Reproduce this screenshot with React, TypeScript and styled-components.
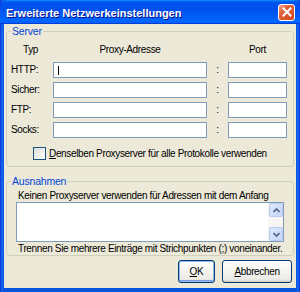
import styled, { createGlobalStyle } from 'styled-components';

const GlobalStyle = createGlobalStyle`
  html, body {
    margin: 0;
    padding: 0;
    background: #fff;
  }
  body {
    font-family: "Liberation Sans", Arial, sans-serif;
    font-size: 10px;
    letter-spacing: -0.35px;
    color: #000;
  }
`;

//Types
interface proxyRow {
  id: string,
  label: string,
  caret?: boolean
}

const rows: proxyRow[] = [
  { id: 'http', label: 'HTTP:', caret: true },
  { id: 'ssl', label: 'Sicher:' },
  { id: 'ftp', label: 'FTP:' },
  { id: 'socks', label: 'Socks:' },
];

const App: React.FC = () => {
  return (
    <>
      <GlobalStyle />
      <Window>
        <TitleBar>
          <Title>Erweiterte Netzwerkeinstellungen</Title>
          <CloseButton>
            <svg width="10" height="10" viewBox="0 0 10 10">
              <path d="M1.5 1.5 L8.5 8.5 M8.5 1.5 L1.5 8.5" stroke="#fff" strokeWidth="2" strokeLinecap="square" />
            </svg>
          </CloseButton>
        </TitleBar>
        <Body>
          <Group>
            <Legend>Server</Legend>
            <ProxyGrid>
              <Head>Typ</Head>
              <Head>Proxy-Adresse</Head>
              <Head />
              <Head>Port</Head>
              {rows.map((row) => (
                <Row key={row.id}>
                  <Label>{row.label}</Label>
                  <Input>{row.caret && <Caret />}</Input>
                  <Colon>:</Colon>
                  <Input />
                </Row>
              ))}
            </ProxyGrid>
            <CheckRow>
              <CheckBox />
              <span><u>D</u>enselben Proxyserver für alle Protokolle verwenden</span>
            </CheckRow>
          </Group>
          <Group $gap={8}>
            <Legend>Ausnahmen</Legend>
            <Note $top={3}>Keinen Proxyserver verwenden für Adressen mit dem Anfang</Note>
            <TextArea>
              <TextField />
              <ScrollBar>
                <ScrollButton>
                  <svg width="7" height="5" viewBox="0 0 7 5">
                    <polyline points="0.5,4 3.5,1 6.5,4" fill="none" stroke="#4D6185" strokeWidth="1.6" />
                  </svg>
                </ScrollButton>
                <Track />
                <ScrollButton>
                  <svg width="7" height="5" viewBox="0 0 7 5">
                    <polyline points="0.5,1 3.5,4 6.5,1" fill="none" stroke="#4D6185" strokeWidth="1.6" />
                  </svg>
                </ScrollButton>
              </ScrollBar>
            </TextArea>
            <Note $top={1}>Trennen Sie mehrere Einträge mit Strichpunkten (;) voneinander.</Note>
          </Group>
          <Buttons>
            <Button $default $width={37}><u>O</u>K</Button>
            <Button $width={70}><u>A</u>bbrechen</Button>
          </Buttons>
        </Body>
      </Window>
    </>
  );
};

const Window = styled.div`
  width: 300px;
  height: 292px;
  box-sizing: border-box;
  display: flex;
  flex-direction: column;
  background: linear-gradient(90deg, #0831d9 0px, #166aee 2px, #0855dd 4px, #0855dd 296px, #166aee 298px, #0831d9 300px);
`;

const TitleBar = styled.div`
  height: 24px;
  flex: none;
  display: flex;
  align-items: center;
  justify-content: space-between;
  padding: 0 5px 0 6px;
  border-radius: 7px 7px 0 0;
  background: linear-gradient(180deg, #0997ff, #0053ee 8%, #0050ee 40%, #06f 88%, #06f 93%, #005bff 95%, #003dd7 96%, #003dd7);
`;

const Title = styled.span`
  color: #fff;
  font-weight: bold;
  font-size: 11px;
  letter-spacing: 0;
  text-shadow: 1px 1px #0f1089;
  margin-top: 1px;
`;

const CloseButton = styled.div`
  width: 17px;
  height: 17px;
  box-sizing: border-box;
  border: 1px solid #fff;
  border-radius: 3px;
  display: flex;
  align-items: center;
  justify-content: center;
  background: linear-gradient(135deg, #f0a488 0%, #e0623a 35%, #d2441c 100%);
`;

const Body = styled.div`
  flex: 1;
  margin: 0 4px 4px;
  background: #ece9d8;
  display: flex;
  flex-direction: column;
`;

const Group = styled.fieldset<{ $gap?: number }>`
  margin: ${(p) => p.$gap ?? 1}px 2px 0;
  padding: 0;
  border: 1px solid #d0d0bf;
  border-radius: 3px;
  min-inline-size: 0;
`;

const Legend = styled.legend`
  color: #0046d5;
  font-size: 10.5px;
  letter-spacing: -0.2px;
  line-height: 12px;
  padding: 0 1px;
  margin-left: 4px;
`;

const ProxyGrid = styled.div`
  display: grid;
  grid-template-columns: 42px 154px 21px 59px;
  row-gap: 4px;
  padding: 7px 6px 0 4px;
`;

const Head = styled.div`
  line-height: 12px;
  text-align: center;
  margin-bottom: 2px;
  &:first-child {
    text-align: left;
    padding-left: 12px;
  }
`;

const Row = styled.div`
  display: contents;
`;

const Label = styled.div`
  height: 16px;
  line-height: 16px;
`;

const Input = styled.div`
  height: 16px;
  box-sizing: border-box;
  border: 1px solid #7f9db9;
  background: #fff;
  display: flex;
  align-items: center;
  padding-left: 4px;
`;

const Caret = styled.span`
  width: 1px;
  height: 9px;
  background: #000;
`;

const Colon = styled.div`
  height: 16px;
  line-height: 16px;
  text-align: center;
`;

const CheckRow = styled.div`
  display: flex;
  align-items: center;
  gap: 3px;
  padding: 9px 0 6px 26px;
  line-height: 13px;
`;

const CheckBox = styled.div`
  width: 13px;
  height: 13px;
  box-sizing: border-box;
  border: 1px solid #1c5180;
  background: linear-gradient(135deg, #dcdcd7, #fff);
`;

const Note = styled.div<{ $top: number }>`
  line-height: 12px;
  padding-left: 11px;
  margin-top: ${(p) => p.$top}px;
  white-space: nowrap;
`;

const TextArea = styled.div`
  display: flex;
  height: 40px;
  box-sizing: border-box;
  margin: 0 9px;
  border: 1px solid #7f9db9;
  background: #fff;
`;

const TextField = styled.div`
  flex: 1;
`;

const ScrollBar = styled.div`
  width: 15px;
  display: flex;
  flex-direction: column;
  background: #f4f3ee;
`;

const ScrollButton = styled.div`
  height: 14px;
  margin: 0 0 0 1px;
  box-sizing: border-box;
  border: 1px solid #b8cdf6;
  border-radius: 2px;
  background: linear-gradient(135deg, #dfe8fd, #c4d4f9);
  display: flex;
  align-items: center;
  justify-content: center;
`;

const Track = styled.div`
  flex: 1;
  background: #f7f6f2;
`;

const Buttons = styled.div`
  display: flex;
  justify-content: flex-end;
  gap: 7px;
  margin: 4px 4px 0 0;
`;

const Button = styled.div<{ $default?: boolean, $width: number }>`
  width: ${(p) => p.$width}px;
  height: 23px;
  box-sizing: border-box;
  border: 1px solid #003c74;
  border-radius: 3px;
  background: linear-gradient(180deg, #fff, #ecebe6 86%, #d6d0c5);
  box-shadow: ${(p) => (p.$default ? 'inset 0 0 0 1px #98b8ea, inset 0 -1px 0 1px #7ca0e0' : 'inset 0 -1px 0 #d6d0c5')};
  display: flex;
  align-items: center;
  justify-content: center;
  line-height: 12px;
`;

export default App;
